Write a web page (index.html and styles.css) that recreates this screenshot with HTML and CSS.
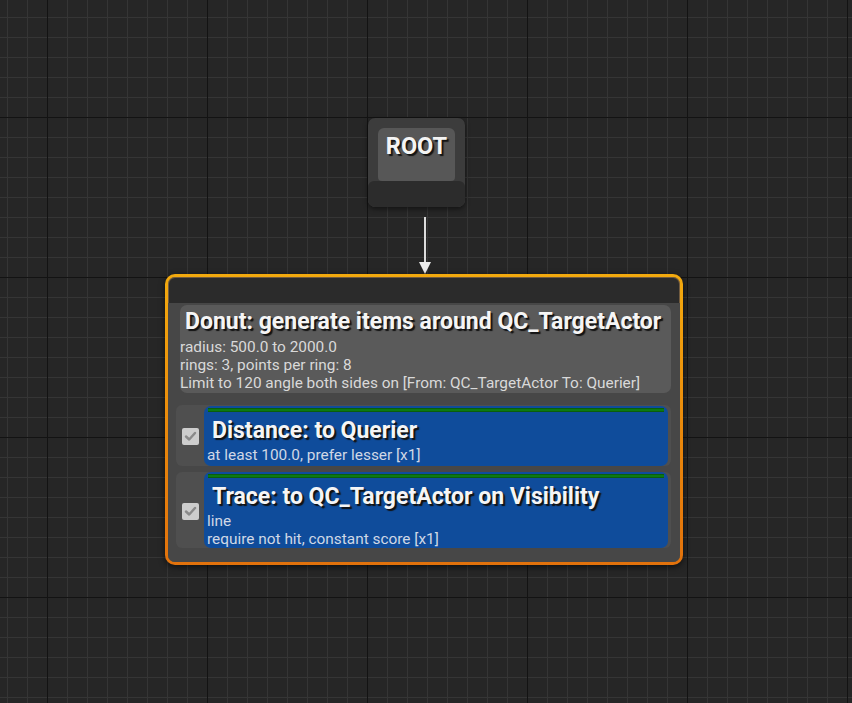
FILE: index.html
```html
<!DOCTYPE html>
<html>
<head>
<meta charset="utf-8">
<link rel="stylesheet" href="styles.css">
</head>
<body>
<div class="canvas">
  <div class="root-node">
    <div class="root-top"><div class="root-label">ROOT</div></div>
    <div class="root-bottom"></div>
  </div>

  <svg class="link" width="20" height="60" viewBox="0 0 20 60">
    <line x1="10" y1="0" x2="10" y2="50" stroke="#dcdcdc" stroke-width="2"/>
    <polygon points="4,45 16,45 10,57" fill="#ececec"/>
  </svg>

  <div class="gen-node">
    <div class="gen-inner">
      <div class="gen-header"></div>
      <div class="gen-body">
        <div class="gen-panel">
          <div class="title gen-title">Donut: generate items around QC_TargetActor</div>
          <div class="desc">radius: 500.0 to 2000.0</div>
          <div class="desc">rings: 3, points per ring: 8</div>
          <div class="desc">Limit to 120 angle both sides on [From: QC_TargetActor To: Querier]</div>
        </div>
        <div class="tests">
          <div class="test">
            <div class="check-col"><span class="check"><svg width="17" height="17" viewBox="0 0 17 17"><path d="M4 8.5 L7.2 11.5 L13 5" fill="none" stroke="#8a8a8a" stroke-width="2.4" stroke-linecap="round" stroke-linejoin="round"/></svg></span></div>
            <div class="test-box box-1">
              <div class="bar"></div>
              <div class="title test-title">Distance: to Querier</div>
              <div class="desc tdesc">at least 100.0, prefer lesser [x1]</div>
            </div>
          </div>
          <div class="test">
            <div class="check-col"><span class="check"><svg width="17" height="17" viewBox="0 0 17 17"><path d="M4 8.5 L7.2 11.5 L13 5" fill="none" stroke="#8a8a8a" stroke-width="2.4" stroke-linecap="round" stroke-linejoin="round"/></svg></span></div>
            <div class="test-box box-2">
              <div class="bar"></div>
              <div class="title test-title">Trace: to QC_TargetActor on Visibility</div>
              <div class="desc tdesc">line</div>
              <div class="desc tdesc">require not hit, constant score [x1]</div>
            </div>
          </div>
        </div>
      </div>
    </div>
  </div>
</div>
</body>
</html>
```

FILE: styles.css
```css
html, body {
  margin: 0;
  padding: 0;
}
body {
  width: 852px;
  height: 703px;
  overflow: hidden;
  font-family: Roboto, "Liberation Sans", sans-serif;
}
.canvas {
  position: relative;
  width: 852px;
  height: 703px;
  background-color: #262626;
  background-image:
    linear-gradient(to right, #131313 0, #131313 1px, transparent 1px),
    linear-gradient(to bottom, #131313 0, #131313 1px, transparent 1px),
    linear-gradient(to right, #353535 0, #353535 1px, transparent 1px),
    linear-gradient(to bottom, #353535 0, #353535 1px, transparent 1px);
  background-size: 160px 160px, 160px 160px, 20px 20px, 20px 20px;
  background-position: 47px 0, 0 117px, 7px 0, 0 17px;
}

/* ROOT node */
.root-node {
  position: absolute;
  left: 368px;
  top: 118px;
  width: 97px;
  height: 89px;
  border-radius: 7px;
  background: #3c3c3c;
  box-shadow: 0 2px 5px rgba(0,0,0,0.5);
  display: flex;
  flex-direction: column;
  overflow: hidden;
}
.root-top {
  padding: 10px 10px 0 10px;
  height: 53px;
}
.root-label {
  height: 53px;
  background: #575757;
  border-radius: 6px 6px 4px 4px;
  color: #f4f4f4;
  font-weight: 700;
  font-size: 23.5px;
  text-align: center;
  line-height: 24px;
  padding-top: 6px;
  box-sizing: border-box;
  text-shadow: 2px 2px 1px #141414;
}
.root-bottom {
  flex: 1;
  background: #2c2c2c;
  border-radius: 6px 6px 7px 7px;
}

.link {
  position: absolute;
  left: 415px;
  top: 217px;
}

/* Generator node */
.gen-node {
  position: absolute;
  left: 165px;
  top: 274px;
  width: 518px;
  height: 291px;
  box-sizing: border-box;
  border-radius: 10px;
  padding: 3px;
  background: linear-gradient(to bottom, #f3aa0e, #e8850b 60%, #e2720c);
  box-shadow: 0 2px 6px rgba(0,0,0,0.6);
}
.gen-inner {
  height: 100%;
  box-sizing: border-box;
  border-radius: 7px;
  background: #464646;
  box-shadow: inset 0 0 0 3px rgba(150,110,60,0.55);
  display: flex;
  flex-direction: column;
  overflow: hidden;
}
.gen-header {
  height: 25px;
  flex: none;
  margin: 1px 1px 0 1px;
  background: #2b2b2b;
  border-radius: 6px 6px 0 0;
}
.gen-body {
  flex: 1;
  background: #474747;
  padding: 2px 9px 0 12px;
  display: flex;
  flex-direction: column;
}
.gen-panel {
  background: #5a5a5a;
  border-radius: 7px;
  height: 88px;
  box-sizing: border-box;
  padding: 3px 0 0 0;
}
.title {
  color: #f5f5f5;
  font-weight: 700;
  font-size: 23px;
  line-height: 28px;
  padding-left: 5px;
  text-shadow: 2px 2px 1px #121212;
  white-space: nowrap;
}
.gen-title {
  margin-bottom: 2px;
}
.desc {
  color: #d9d9d9;
  font-size: 15.4px;
  line-height: 18px;
  white-space: nowrap;
}
.tests {
  margin-top: 12px;
  margin-left: -4px;
  margin-right: 0;
  display: flex;
  flex-direction: column;
  gap: 6px;
}
.test {
  display: flex;
  background: #4f4f4f;
  border-radius: 6px;
  padding-right: 3px;
}
.check-col {
  width: 28px;
  flex: none;
  display: flex;
  align-items: center;
  justify-content: center;
  padding-right: 1px;
  padding-left: 1px;
  box-sizing: border-box;
}
.check {
  width: 17px;
  height: 17px;
  background: #cdcdcd;
  border-radius: 2px;
  display: block;
  margin-top: 2px;
}
.check svg { display: block; }
.test-box {
  flex: 1;
  background: #0f4c9b;
  border-radius: 7px;
  padding: 2px 4px 0 3px;
  box-sizing: border-box;
}
.box-1 { height: 60px; margin-top: 1px; }
.box-2 { height: 76px; }
.bar {
  height: 4px;
  margin: 0 0 0 1px;
  background: #0c7a12;
  box-shadow: inset 0 1px 0 #0a5e0c, inset 0 -1px 0 #0a5e0c;
}
.test-title {
  line-height: 30px;
  padding-top: 4px;
  padding-left: 5px;
}
.tdesc {
  color: #d0d8e6;
}
```
